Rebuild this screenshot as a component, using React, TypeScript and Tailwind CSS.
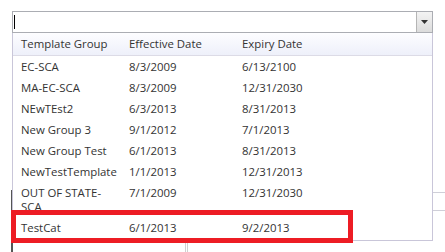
import { FC } from "react";

/**
 * Rows of the template group picker, in the order the grid shows them
 */
const Groups = [
  { name: "EC-SCA", effective: "8/3/2009", expiry: "6/13/2100" },
  { name: "MA-EC-SCA", effective: "8/3/2009", expiry: "12/31/2030" },
  { name: "NEwTEst2", effective: "6/3/2013", expiry: "8/31/2013" },
  { name: "New Group 3", effective: "9/1/2012", expiry: "7/1/2013" },
  { name: "New Group Test", effective: "6/1/2013", expiry: "8/31/2013" },
  { name: "NewTestTemplate", effective: "1/1/2013", expiry: "12/31/2013" },
  { name: "OUT OF STATE-SCA", effective: "7/1/2009", expiry: "12/31/2030" },
  { name: "TestCat", effective: "6/1/2013", expiry: "9/2/2013" },
];

const Row: FC<{ a: string; b: string; c: string; head?: boolean }> = ({ a, b, c, head }) => (
  <div
    className={
      head
        ? "flex pl-[8px] pt-[4px] pb-[4px] leading-[14px] bg-gradient-to-b from-[#fdfdff] to-[#eef0fa] border-b border-[#dcdbe6]"
        : "flex pl-[8px] pt-[4px] pb-[3px] leading-[14px]"
    }
  >
    <div className="w-[108px] pr-[8px] break-words">{a}</div>
    <div className="w-[113px]">{b}</div>
    <div className="flex-1">{c}</div>
  </div>
);

const App: FC = () => {
  return (
    <div
      className="relative w-[445px] h-[252px] overflow-hidden bg-white text-[11.4px] text-[#333]"
      style={{ fontFamily: '"Open Sans", "Noto Sans", sans-serif' }}
    >
      {/* page content behind the open drop down */}
      <div className="pt-[190px] pl-[11px] flex">
        <div className="w-[2px] h-[62px] bg-[#555]" />
        <div className="flex-1 flex flex-col">
          <div className="h-[2px]" />
          <div className="flex justify-end">
            <div className="w-[14px] border-t border-[#cfcfd8]" />
          </div>
          <div className="h-[17px]" />
          <div className="flex justify-end">
            <div className="w-[14px] border-t border-[#cfcfd8]" />
          </div>
          <div className="flex pl-[172px] pt-[32px]">
            <div className="w-[1px] h-[12px] bg-[#d0d0d0]" />
            <div className="w-[1px] ml-[1px] h-[12px] bg-[#d0d0d0]" />
          </div>
        </div>
      </div>

      {/* combo box with its open list */}
      <div className="absolute left-[12px] top-[11px] w-[421px]">
        <div className="flex h-[22px] border border-[#abadb3] bg-white">
          <div className="flex-1 flex items-center pl-[1px]">
            <div className="w-[1px] h-[14px] bg-black" />
          </div>
          <div className="w-[16px] flex items-center justify-center border-l border-[#b5b5b5] bg-gradient-to-b from-[#f3f3f3] to-[#dcdcdc]">
            <svg width="7" height="4" viewBox="0 0 7 4">
              <path d="M0 0h7L3.5 4z" fill="#333" />
            </svg>
          </div>
        </div>
        <div className="h-[208px] border border-t-0 border-[#c9c6d9] bg-white">
          <Row a="Template Group" b="Effective Date" c="Expiry Date" head />
          {Groups.map((g) => (
            <Row key={g.name} a={g.name} b={g.effective} c={g.expiry} />
          ))}
        </div>
      </div>

      {/* red mark round the chosen row */}
      <div className="absolute left-[11px] top-[210px] w-[342px] h-[33px] border-[5px] border-[#ed1c24]" />
    </div>
  );
};

export default App;
